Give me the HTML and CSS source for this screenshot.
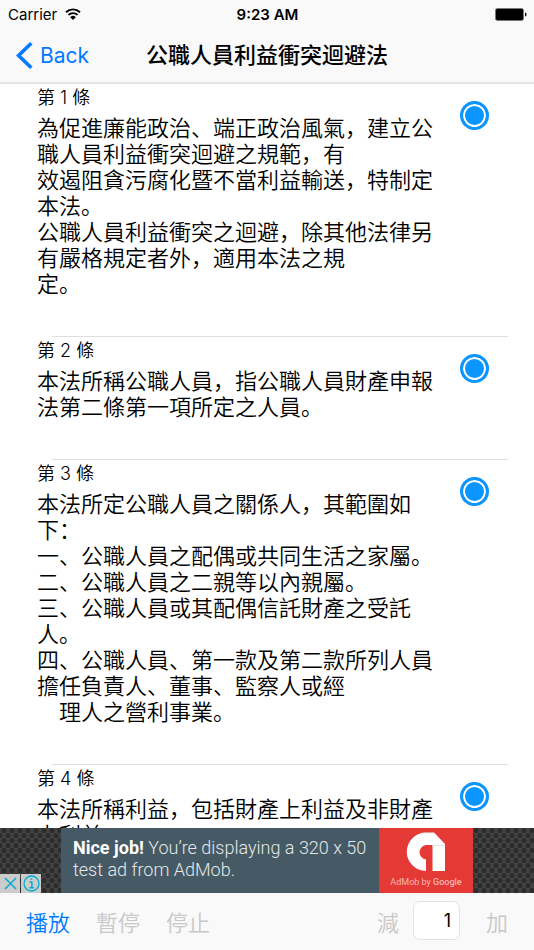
FILE: index.html
```
<!DOCTYPE html>
<html lang="zh">
<head>
    <meta charset="UTF-8">
    <meta name="viewport" content="width=device-width, initial-scale=1.0">
    <title>公職人員利益衝突迴避法</title>
    <link rel="stylesheet" href="styles.css">
</head>
<body>
    <header class="header">
        <div class="status-bar">
            <div class="carrier">
                <span>Carrier</span>
                <svg width="16" height="12" viewBox="0 0 16 12">
                    <path d="M1 4.2a10.2 10.2 0 0 1 14 0M3.4 6.9a6.8 6.8 0 0 1 9.2 0" fill="none" stroke="#000" stroke-width="1.9"/>
                    <path d="M8 12L5.2 9.2a4 4 0 0 1 5.6 0z"/>
                </svg>
            </div>
            <span class="time">9:23 AM</span>
            <svg class="battery" width="32" height="13" viewBox="0 0 32 13">
                <rect x="0.5" y="0.5" width="28" height="12" rx="2" stroke="#777"/>
                <path d="M30 4.5c2 .6 2 3.4 0 4z"/>
            </svg>
        </div>
        <nav class="nav-bar">
            <a class="back" href="#">
                <svg width="17" height="27" viewBox="0 0 17 27">
                    <path d="M15.3 1.3L2.6 13.5l12.7 12.2" fill="none" stroke="#007aff" stroke-width="3.6"/>
                </svg>
                Back
            </a>
            <h1>公職人員利益衝突迴避法</h1>
        </nav>
    </header>

    <main class="list">
        <article class="row">
            <div class="text">
                <h2>第 1 條</h2>
                <p>為促進廉能政治、端正政治風氣，建立公職人員利益衝突迴避之規範，有<br>效遏阻貪污腐化暨不當利益輸送，特制定本法。<br>公職人員利益衝突之迴避，除其他法律另有嚴格規定者外，適用本法之規<br>定。</p>
            </div>
            <input class="pick" type="checkbox" aria-label="第 1 條" checked>
        </article>
        <article class="row">
            <div class="text">
                <h2>第 2 條</h2>
                <p>本法所稱公職人員，指公職人員財產申報法第二條第一項所定之人員。</p>
            </div>
            <input class="pick" type="checkbox" aria-label="第 2 條" checked>
        </article>
        <article class="row">
            <div class="text">
                <h2>第 3 條</h2>
                <p>本法所定公職人員之關係人，其範圍如下：<br>一、公職人員之配偶或共同生活之家屬。<br>二、公職人員之二親等以內親屬。<br>三、公職人員或其配偶信託財產之受託人。<br>四、公職人員、第一款及第二款所列人員擔任負責人、董事、監察人或經<br>　理人之營利事業。</p>
            </div>
            <input class="pick" type="checkbox" aria-label="第 3 條" checked>
        </article>
        <article class="row">
            <div class="text">
                <h2>第 4 條</h2>
                <p>本法所稱利益，包括財產上利益及非財產上利益。</p>
            </div>
            <input class="pick" type="checkbox" aria-label="第 4 條" checked>
        </article>
    </main>

    <aside class="ad">
        <svg class="ad-pattern" width="100%" height="100%">
            <defs>
                <pattern id="hex" width="8" height="10" patternUnits="userSpaceOnUse">
                    <rect width="8" height="10" fill="#434343"/>
                    <g fill="#2c2c2c">
                        <circle cx="4" cy="2.5" r="2.6"/>
                        <circle cx="0" cy="7.5" r="2.6"/>
                        <circle cx="8" cy="7.5" r="2.6"/>
                    </g>
                </pattern>
            </defs>
            <rect width="100%" height="100%" fill="url(#hex)"/>
        </svg>
        <a class="banner" href="#">
            <span class="ad-text"><b>Nice job!</b> You’re displaying a 320 x 50 test ad from AdMob.</span>
            <span class="admob">
                <svg width="40" height="40" viewBox="0 0 40 40">
                    <path d="M20 .5h8L39 12V39H26.5V13H20a7.3 7.3 0 0 0 0 14.500V39A19.2 19.2 0 0 1 20 .5z" fill="#fff"/>
                    <path d="M26.5 13H39v1H26.5z" fill="#e4e4e4"/>
                </svg>
                <small>AdMob by <b>Google</b></small>
            </span>
        </a>
        <div class="ad-choices">
            <button aria-label="Close ad">
                <svg width="13" height="13" viewBox="0 0 13 13">
                    <path d="M1 1l11 11M12 1L1 12" stroke="#00aecd" stroke-width="1.5"/>
                </svg>
            </button>
            <button aria-label="Ad info">
                <svg width="17" height="17" viewBox="0 0 17 17">
                    <circle cx="8.5" cy="8.5" r="7.5" fill="none" stroke="#00aecd" stroke-width="1.3"/>
                    <path d="M6.5 7h2.4v5.5M6.3 12.7h4.6M7.6 4h1.8" fill="none" stroke="#00aecd" stroke-width="1.5"/>
                </svg>
            </button>
        </div>
    </aside>

    <footer class="toolbar">
        <button>播放</button>
        <button disabled>暫停</button>
        <button disabled>停止</button>
        <div class="stepper">
            <button disabled>減</button>
            <input type="text" value="1" aria-label="次數">
            <button disabled>加</button>
        </div>
    </footer>
</body>
</html>
```
FILE: styles.css
```
* {
    box-sizing: border-box;
}
body {
    display: flex;
    flex-direction: column;
    height: 100vh;
    margin: 0;
    font-family: Inter, "Noto Sans CJK SC", sans-serif;
    color: #000;
    background-color: #fff;
}
h1, h2, p {
    margin: 0;
}
button {
    padding: 0;
    border: none;
    background: none;
    font: inherit;
    color: #007aff;
    cursor: pointer;
}
button:disabled {
    color: #c8c8c8;
    cursor: default;
}

/* status bar + navigation */
.header {
    flex: none;
    background-color: #f9f9f9;
    border-bottom: 2px solid #e5e5e5;
}
.status-bar, .nav-bar {
    display: grid;
    grid-template-columns: 1fr auto 1fr;
    align-items: center;
}
.status-bar {
    height: 28px;
    padding: 0 7px 0 8px;
    font-size: 15px;
}
.carrier {
    display: flex;
    align-items: center;
    gap: 8px;
}
.time {
    font-weight: 600;
}
.battery {
    justify-self: end;
}
.nav-bar {
    height: 54px;
    padding: 0 16px;
}
.back {
    display: flex;
    align-items: center;
    gap: 7px;
    font-size: 21px;
    color: #007aff;
    text-decoration: none;
}
h1 {
    font-size: 22px;
    font-weight: 500;
    line-height: 32px;
}

/* articles */
.list {
    flex: 1;
    min-height: 0;
    overflow: hidden;
}
.row {
    display: flex;
    gap: 20px;
    padding: 0 45px 40px 37px;
    /* inset separator */
    background: linear-gradient(#dedede, #dedede) 52px 100% / calc(100% - 78px) 1px no-repeat;
}
.text {
    flex: 1;
    font-weight: 350;
}
.text h2 {
    margin-bottom: 4px;
    font-size: 18px;
    font-weight: inherit;
    line-height: 27px;
}
.text p {
    font-size: 22px;
    line-height: 26px;
}
.pick {
    flex: none;
    appearance: none;
    width: 29px;
    height: 29px;
    margin: 17px 0 0;
    border: 3px solid #0a95ff;
    border-radius: 50%;
    background-color: #0a95ff;
    box-shadow: inset 0 0 0 2px #fff;
}

/* ad */
.ad {
    position: relative;
    flex: none;
    height: 65px;
}
.ad-pattern {
    position: absolute;
    inset: 0;
}
.banner {
    position: relative;
    display: flex;
    width: 412px;
    height: 100%;
    margin: 0 auto;
    font-family: Roboto, sans-serif;
    color: #e4e8ea;
    background-color: #455a64;
    text-decoration: none;
}
.ad-text {
    flex: 1;
    padding: 9px 0 0 12px;
    font-size: 18px;
    font-weight: 300;
    line-height: 22px;
}
.ad-text b {
    font-weight: 700;
    color: #fff;
}
.admob {
    display: flex;
    flex-direction: column;
    align-items: center;
    gap: 4px;
    width: 94px;
    padding-top: 4px;
    background-color: #e53935;
}
.admob small {
    font-size: 9px;
    line-height: 12px;
    color: #f5b5b3;
    white-space: nowrap;
}
.admob b {
    font-weight: 500;
}
.ad-choices {
    position: absolute;
    left: 0;
    bottom: 0;
    display: flex;
    gap: 1px;
}
.ad-choices button {
    display: flex;
    align-items: center;
    justify-content: center;
    width: 20px;
    height: 19px;
    background-color: #ccc;
}

/* playback controls */
.toolbar {
    display: flex;
    flex: none;
    align-items: center;
    gap: 26px;
    height: 57px;
    padding: 0 26px 2px;
    font-size: 22px;
    font-weight: 350;
    background-color: #f9f9f9;
}
.stepper {
    display: flex;
    align-items: center;
    gap: 14px;
    margin-left: auto;
}
.stepper input {
    width: 47px;
    height: 39px;
    margin-right: 12px;
    padding: 0 8px;
    border: 1px solid #e2e2e2;
    border-radius: 7px;
    font-family: inherit;
    font-size: 18px;
    text-align: right;
    background-color: #fff;
}
```
